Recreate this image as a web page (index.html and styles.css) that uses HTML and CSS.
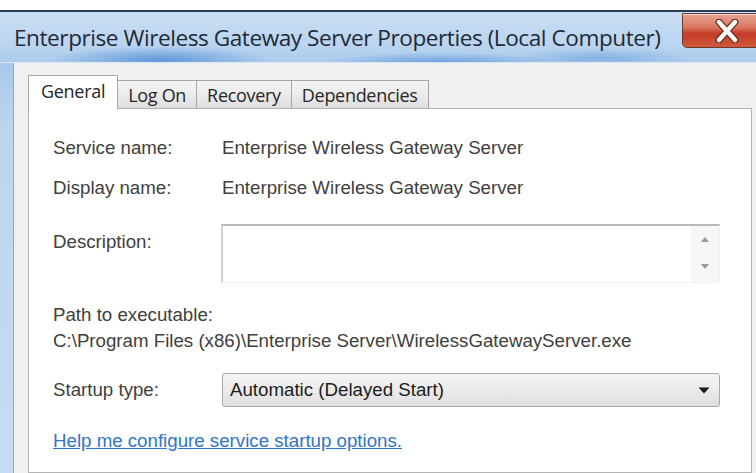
FILE: index.html
```html
<!DOCTYPE html>
<html lang="en">
<head>
<meta charset="utf-8">
<title>Enterprise Wireless Gateway Server Properties (Local Computer)</title>
<link rel="stylesheet" href="styles.css">
</head>
<body>
<div class="screen">
  <div class="window">
    <div class="titlebar">
      <span class="title">Enterprise Wireless Gateway Server Properties (Local Computer)</span>
      <button class="close" type="button" aria-label="Close">
        <svg width="30" height="24" viewBox="0 0 30 24" aria-hidden="true">
          <path d="M7 3 L23 21 M23 3 L7 21" stroke="#6b2a20" stroke-width="7" stroke-linecap="round"/>
          <path d="M7 3 L23 21 M23 3 L7 21" stroke="#ffffff" stroke-width="4.4" stroke-linecap="round"/>
        </svg>
      </button>
    </div>
    <div class="client">
      <div class="tabs">
        <div class="tab active">General</div>
        <div class="tab">Log On</div>
        <div class="tab">Recovery</div>
        <div class="tab">Dependencies</div>
      </div>
      <div class="panel">
        <div class="field row-service">
          <span class="label">Service name:</span>
          <span class="value">Enterprise Wireless Gateway Server</span>
        </div>
        <div class="field row-display">
          <span class="label">Display name:</span>
          <span class="value">Enterprise Wireless Gateway Server</span>
        </div>
        <div class="field row-desc">
          <span class="label">Description:</span>
          <div class="desc-box">
            <div class="desc-text"></div>
            <div class="scroll">
              <svg width="10" height="6" viewBox="0 0 10 6"><path d="M1 6 L5 1 L9 6 Z" fill="#9a9a9a"/></svg>
              <svg width="10" height="6" viewBox="0 0 10 6"><path d="M1 0 L5 5 L9 0 Z" fill="#9a9a9a"/></svg>
            </div>
          </div>
        </div>
        <div class="path-label">Path to executable:</div>
        <div class="path-value">C:\Program Files (x86)\Enterprise Server\WirelessGatewayServer.exe</div>
        <div class="field row-startup">
          <span class="label">Startup type:</span>
          <div class="combo">
            <span class="combo-text">Automatic (Delayed Start)</span>
            <svg width="12" height="7" viewBox="0 0 12 7"><path d="M0.5 0.5 L11.5 0.5 L6 6.5 Z" fill="#1a1a1a"/></svg>
          </div>
        </div>
        <a class="help-link" href="#">Help me configure service startup options.</a>
      </div>
    </div>
  </div>
</div>
</body>
</html>
```

FILE: styles.css
```css
html, body {
  margin: 0;
  height: 100%;
  overflow: hidden;
  background: #ffffff;
}

.screen {
  height: 100%;
  box-sizing: border-box;
  padding-top: 10px;
  display: flex;
  flex-direction: column;
}

/* Aero window frame */
.window {
  flex: 1;
  display: flex;
  flex-direction: column;
  border-top: 2px solid #2a3c55;
  padding-left: 13px;
  background:
    radial-gradient(ellipse 110px 14px at 160px 48px, rgba(70, 135, 210, 0.75), rgba(70, 135, 210, 0) 100%),
    radial-gradient(ellipse 120px 12px at 440px 52px, rgba(70, 135, 210, 0.7), rgba(70, 135, 210, 0) 100%),
    radial-gradient(ellipse 90px 10px at 600px 46px, rgba(90, 150, 215, 0.5), rgba(90, 150, 215, 0) 100%),
    linear-gradient(180deg, #c9def4 0px, #bcd5f0 30px, #a9c9ec 55px, #bcd5ee 120px, #c6dcf2 473px);
}

.titlebar {
  height: 51px;
  margin-left: -13px;
  padding-left: 14px;
  display: flex;
  align-items: flex-start;
  justify-content: space-between;
  border-bottom: 1px solid #d9e6f3;
  box-sizing: border-box;
}

.title {
  margin-top: 11px;
  font-family: "Open Sans", "Noto Sans", sans-serif;
  font-size: 22.6px;
  line-height: 30px;
  letter-spacing: -0.45px;
  color: #1e2a36;
  white-space: nowrap;
}

.close {
  margin-top: 1px;
  margin-right: -16px;
  width: 90px;
  height: 35px;
  padding: 0;
  border: 1px solid #6f3a33;
  border-radius: 0 0 5px 5px;
  background: linear-gradient(180deg, #e7a495 0%, #d97660 40%, #c43b26 60%, #cf5a3c 100%);
  display: flex;
  align-items: center;
  justify-content: center;
  box-shadow: inset 0 1px 0 rgba(255, 255, 255, 0.5);
}

/* dialog client area */
.client {
  flex: 1;
  display: flex;
  flex-direction: column;
  background: #f0f0f0;
  border-left: 1px solid #9aa6b4;
  padding: 12px 0 0 14px;
}

.tabs {
  display: flex;
  align-items: flex-end;
  height: 33px;
}

.tab {
  height: 28px;
  box-sizing: border-box;
  padding: 0 10px;
  display: flex;
  align-items: center;
  font-family: "Open Sans", "Noto Sans", sans-serif;
  font-size: 18px;
  letter-spacing: -0.3px;
  color: #262626;
  border: 1px solid #a6a6a6;
  border-left: none;
  border-bottom: none;
  background: linear-gradient(180deg, #f4f4f4 0%, #ebebeb 50%, #dedede 100%);
}

.tab.active {
  position: relative;
  z-index: 1;
  height: 34px;
  margin-bottom: -1px;
  padding: 0 12px 4px;
  border-left: 1px solid #a6a6a6;
  background: #ffffff;
}

.panel {
  flex: 1;
  margin-right: 4px;
  padding: 0 31px 0 24px;
  background: #ffffff;
  border: 1px solid #b3b3b3;
  display: flex;
  flex-direction: column;
  font-family: "Liberation Sans", Arial, sans-serif;
  font-size: 18.7px;
  line-height: 22px;
  color: #404040;
}

.field {
  display: flex;
  align-items: center;
}

.label {
  width: 169px;
  flex: none;
}

.row-service { margin-top: 28px; }
.row-display { margin-top: 18px; }

.row-desc {
  margin-top: 25px;
  align-items: flex-start;
}

.row-desc .label {
  padding-top: 7px;
}

.desc-box {
  flex: 1;
  height: 59px;
  margin-left: -1px;
  display: flex;
  border-top: 2px solid #b9b9b9;
  border-left: 2px solid #d2d2d2;
  border-right: 1px solid #ededed;
  border-bottom: 1px solid #f2f2f2;
  box-sizing: border-box;
}

.desc-text {
  flex: 1;
}

.scroll {
  width: 28px;
  background: #f6f6f6;
  display: flex;
  flex-direction: column;
  align-items: center;
  justify-content: space-between;
  padding: 10px 0 12px;
  box-sizing: border-box;
}

.path-label { margin-top: 21px; }
.path-value { margin-top: 4px; }

.row-startup { margin-top: 21px; }

.combo {
  flex: 1;
  height: 34px;
  box-sizing: border-box;
  border: 1px solid #a9a9a9;
  border-radius: 3px;
  background: linear-gradient(180deg, #f4f4f4 0%, #ebebeb 50%, #dfdfdf 100%);
  display: flex;
  align-items: center;
  justify-content: space-between;
  padding: 0 9px 0 7px;
  color: #1c1c1c;
}

.help-link {
  margin-top: 23px;
  align-self: flex-start;
  color: #2f74cc;
  text-decoration: underline;
}
```
